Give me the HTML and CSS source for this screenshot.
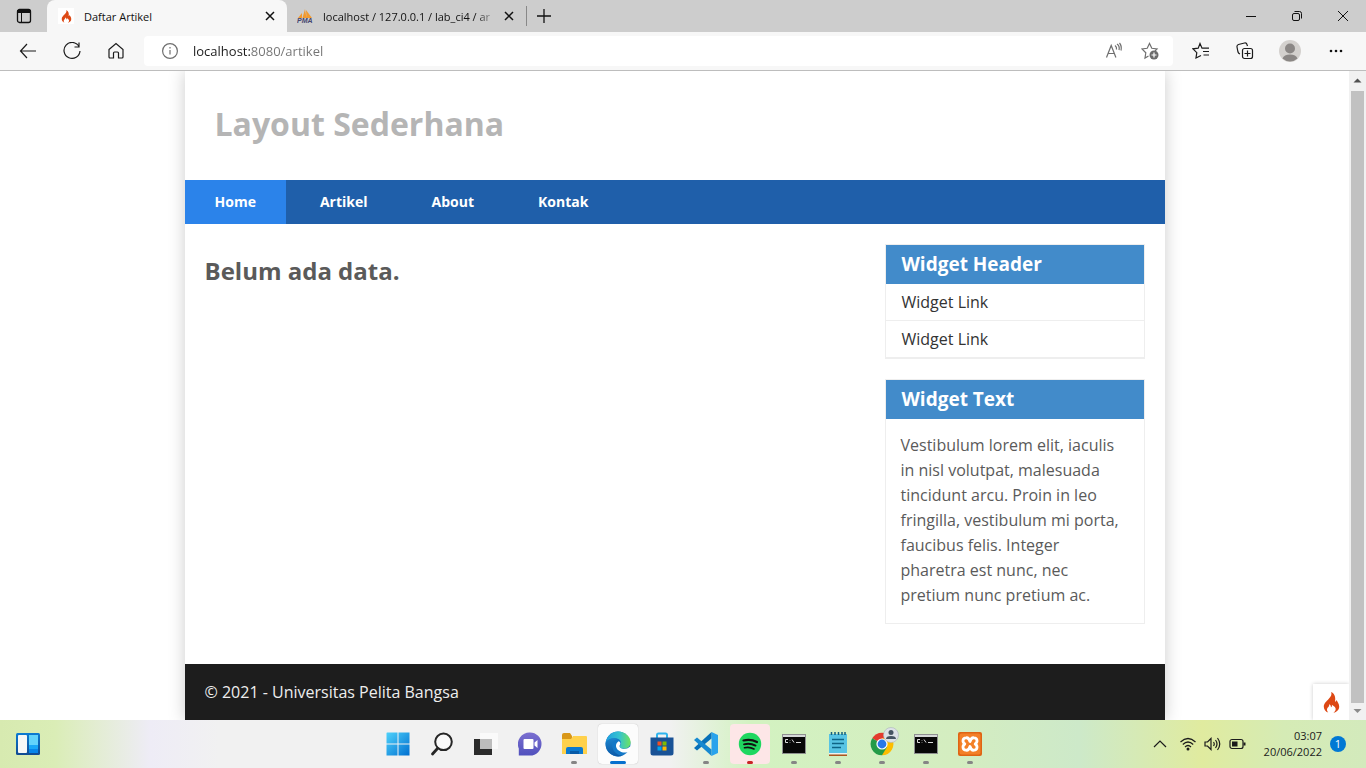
FILE: index.html
```html
<!DOCTYPE html>
<html lang="id">
<head>
<meta charset="utf-8">
<meta name="viewport" content="width=device-width, initial-scale=1">
<title>Daftar Artikel</title>
<link rel="stylesheet" href="styles.css">
</head>
<body>
<svg class="defs" aria-hidden="true">
  <defs>
    <symbol id="flame" viewBox="0 0 24 30"><path d="M11.5 0c1.400 4-.6 6.700-3.600 9.900C4.600 13.500 1 16 1 21c0 3.700 2.400 7 6.300 8.400-2-2-2.500-4.800-.6-7.100 1.300-1.600 2.300-2.600 2-4.900 1.900.9 2.700 2.600 2.500 4.500 1.300-.5 1.800-2.100 1.300-3.700 3.700 2.300 6 4.200 5.400 7.300-.3 1.800-1.300 3-3.100 4 4.800-.9 8.300-4.300 8.200-8.900-.1-4-2.500-6-3.700-9-.6 1.500-1.200 2.200-2.300 2.400C18 9.100 17.400 2.700 11.500 0z"/></symbol>
    <symbol id="cross" viewBox="0 0 12 12"><path d="M2 2l8 8M10 2l-8 8"/></symbol>
    <symbol id="terminal" viewBox="0 0 24 24">
      <rect x="0" y="2" width="24" height="20" fill="#8e9090"/><rect x="1" y="3" width="22" height="2" fill="#d5d8d8"/><rect x="1" y="5" width="22" height="16" fill="#080808"/>
      <path d="M6 7.500H3.500v3H6M8 8v.5M8 10v.5M10 7.500l2 3M14 10.500h5" fill="none" stroke="#ddd" stroke-width="1"/>
    </symbol>
  </defs>
</svg>

<div class="tabs">
  <button class="tab-menu" aria-label="Menu tab">
    <svg width="16" height="16" viewBox="0 0 16 16"><rect x="1.500" y="1.500" width="13" height="13" rx="2" fill="none" stroke="#111" stroke-width="1.300"/><path d="M1 2h14v3H1z" fill="#111"/><path d="M5.500 5v10" stroke="#111"/></svg>
  </button>
  <div class="tab tab-active">
    <span class="favicon favicon-white"><svg class="flame" width="11" height="13"><use href="#flame"/></svg></span>
    <span class="tab-title">Daftar Artikel</span>
    <button class="tab-close" aria-label="Tutup tab"><svg class="cross" width="12" height="12"><use href="#cross"/></svg></button>
  </div>
  <div class="tab">
    <span class="favicon"><svg width="16" height="16" viewBox="0 0 16 16"><path d="M1 10l4-5v5zM5.500 10L8 1l1.500 9zM9.500 10l-.5-8 6 8z" fill="#f29a2e"/><text class="pma" x="0" y="15">PMA</text></svg></span>
    <span class="tab-title tab-fade">localhost / 127.0.0.1 / lab_ci4 / ar</span>
    <button class="tab-close" aria-label="Tutup tab"><svg class="cross" width="12" height="12"><use href="#cross"/></svg></button>
  </div>
  <button class="tab-new" aria-label="Tab baru"><svg width="14" height="14" viewBox="0 0 14 14"><path d="M7 0v14M0 7h14" stroke="#111" stroke-width="1.300"/></svg></button>
  <div class="window-buttons">
    <button aria-label="Minimalkan"><svg width="12" height="12" viewBox="0 0 12 12"><path d="M1 6.500h10" stroke="#111"/></svg></button>
    <button aria-label="Pulihkan"><svg width="12" height="12" viewBox="0 0 12 12" fill="none" stroke="#111"><rect x="1.500" y="3.500" width="7" height="7" rx="1.500"/><path d="M3.500 1.500h5a2 2 0 0 1 2 2v5"/></svg></button>
    <button aria-label="Tutup"><svg width="12" height="12" viewBox="0 0 12 12"><path d="M1 1l10 10M11 1L1 11" stroke="#111"/></svg></button>
  </div>
</div>

<div class="toolbar">
  <button aria-label="Kembali"><svg width="18" height="18" viewBox="0 0 18 18"><path d="M17 9H1.500M8 2L1.500 9 8 16"/></svg></button>
  <button aria-label="Muat ulang"><svg width="18" height="18" viewBox="0 0 18 18"><path d="M16 4.500A8 8 0 1 0 17 9M16 .5v4.500h-4.500"/></svg></button>
  <button aria-label="Beranda"><svg width="18" height="18" viewBox="0 0 18 18"><path d="M2 7.500L9 1.500l7 6V15a1 1 0 0 1-1 1h-3.500v-5a1 1 0 0 0-1-1h-3a1 1 0 0 0-1 1v5H3a1 1 0 0 1-1-1z"/></svg></button>
  <div class="address">
    <svg class="muted" width="16" height="16" viewBox="0 0 16 16"><circle cx="8" cy="8" r="7.400"/><path d="M8 7v4.500M8 4v1.500"/></svg>
    <input class="url" type="text" aria-label="Alamat" value="localhost:8080/artikel">
    <button class="muted" aria-label="Baca nyaring"><svg width="18" height="18" viewBox="0 0 18 18"><path d="M1.500 15.500l4.700-12 4.700 12M3.200 11.500h6M10 3.500q2 1.500 1.500 4M12 2q3 2 2 6M14.500 1q2.500 3 1.500 7.500"/></svg></button>
    <button class="muted" aria-label="Tambah favorit"><svg width="18" height="18" viewBox="0 0 18 18"><path d="M7.500 14L4 16l.8-5.200L1 7l5.200-.7L8.500 1.500l2.300 4.800L16 7l-2 2"/><circle class="solid" cx="13" cy="13" r="4.500" fill="#6b6b6b"/><path class="plus" d="M13 10.500v5M10.500 13h5"/></svg></button>
  </div>
  <button aria-label="Favorit"><svg width="18" height="18" viewBox="0 0 18 18"><path d="M9 13.500L4 16l.8-5.300L1 6.800l5.200-.6L8 1.500l2 4.700h1.500M11.500 6.200H17M11 9.500h6M11.500 13H17"/></svg></button>
  <button aria-label="Koleksi"><svg width="18" height="18" viewBox="0 0 18 18"><rect x="6.500" y="6.500" width="10" height="10" rx="2"/><path d="M11.500 8.500v6M8.500 11.500h6M4 12q-1.500-.5-2-2L1 5q-.3-2 1.500-2.500l6-1.500q2-.4 2.500 1.500l.5 1.500"/></svg></button>
  <button aria-label="Profil"><svg width="22" height="22" viewBox="0 0 22 22"><g class="solid"><circle cx="11" cy="11" r="11" fill="#d4d1ce"/><circle cx="11" cy="8.500" r="5" fill="#8b8785"/><path d="M3.500 18.500Q5 14.500 11 14.500t7.500 4A11 11 0 0 1 3.500 18.500z" fill="#8b8785"/></g></svg></button>
  <button aria-label="Lainnya"><svg width="18" height="18" viewBox="0 0 18 18"><g class="solid" fill="#111"><circle cx="4" cy="9" r="1.300"/><circle cx="9" cy="9" r="1.300"/><circle cx="14" cy="9" r="1.300"/></g></svg></button>
</div>

<div class="viewport">
  <div class="page">
    <div class="container">
      <header class="site-header"><h1>Layout Sederhana</h1></header>
      <nav class="site-nav">
        <a class="active" href="#home">Home</a>
        <a href="#artikel">Artikel</a>
        <a href="#about">About</a>
        <a href="#kontak">Kontak</a>
      </nav>
      <div class="wrapper">
        <main class="content"><h2>Belum ada data.</h2></main>
        <aside class="sidebar">
          <section class="widget">
            <h3>Widget Header</h3>
            <ul>
              <li><a href="#link-1">Widget Link</a></li>
              <li><a href="#link-2">Widget Link</a></li>
            </ul>
          </section>
          <section class="widget">
            <h3>Widget Text</h3>
            <p>Vestibulum lorem elit, iaculis in nisl volutpat, malesuada tincidunt arcu. Proin in leo fringilla, vestibulum mi porta, faucibus felis. Integer pharetra est nunc, nec pretium nunc pretium ac.</p>
          </section>
        </aside>
      </div>
      <footer class="site-footer">© 2021 - Universitas Pelita Bangsa</footer>
    </div>
    <button class="debug" aria-label="Bilah debug"><svg class="flame" width="17" height="21"><use href="#flame"/></svg></button>
  </div>
  <div class="scrollbar" aria-hidden="true">
    <svg width="17" height="20" viewBox="0 0 17 20"><path d="M4.500 11.500l4-4 4 4z" fill="#505050"/></svg>
    <div class="thumb"></div>
    <svg width="17" height="17" viewBox="0 0 17 17"><path d="M4.500 6l4 4 4-4z" fill="#8b8b8b"/></svg>
  </div>
</div>

<div class="taskbar">
  <div class="task-left">
    <button aria-label="Widget"><svg width="24" height="22" viewBox="0 0 24 22"><defs><linearGradient id="wg" x2="0" y2="1"><stop stop-color="#0c7bd3"/><stop offset="1" stop-color="#114a91"/></linearGradient></defs><rect width="24" height="22" rx="1.500" fill="url(#wg)"/><rect x="2" y="2" width="9" height="18" rx="1" fill="#f7f7f7"/><path d="M13 2h9v10h-9z" fill="#62d3fb"/><path d="M13 12h9v4h-9z" fill="#19a7f7"/><path d="M13 16h9v4h-9z" fill="#0785ea"/></svg></button>
  </div>
  <div class="apps">
    <button aria-label="Mulai"><svg width="24" height="24" viewBox="0 0 24 24"><defs><linearGradient id="win" x2="1" y2="1"><stop stop-color="#4fd2fb"/><stop offset="1" stop-color="#006fd0"/></linearGradient></defs><path d="M1 .5h10.500V11.500H.5V1zM12.500.5h11v11h-11zM.5 12.500h11v11H.5zM12.500 12.500h11v11h-11z" fill="url(#win)"/></svg></button>
    <button aria-label="Cari"><svg width="24" height="24" viewBox="0 0 24 24" fill="none" stroke="#262626"><circle cx="13.500" cy="9.800" r="8.300" fill="#fafafa" stroke-width="2"/><path d="M7.500 16.500L2.500 22" stroke-width="2.800" stroke-linecap="round"/></svg></button>
    <button aria-label="Tampilan tugas"><svg width="24" height="24" viewBox="0 0 24 24"><path d="M0 7h18v16H0z" fill="#2b2b2b"/><path d="M6 1h18v16H6z" fill="#fafafa"/><path d="M6 7h12v10H6z" fill="#bdbdbd"/></svg></button>
    <button aria-label="Chat"><svg width="24" height="24" viewBox="0 0 24 24"><defs><linearGradient id="chat" x2="0" y2="1"><stop stop-color="#7b6fd0"/><stop offset="1" stop-color="#5151bd"/></linearGradient></defs><path d="M12 .5a11.500 11.500 0 1 1 0 23H.8v-7A11.500 11.500 0 0 1 12 .5z" fill="url(#chat)"/><rect x="5.500" y="7" width="10" height="10" rx="1" fill="#fff"/><path d="M16.500 10.500l3-2.500v8l-3-2.500z" fill="#fff"/></svg></button>
    <button class="running" aria-label="File Explorer"><svg width="26" height="24" viewBox="0 0 26 24"><path d="M1 3q0-2 2-2h6l2 3v4H1z" fill="#d99718"/><path d="M1 7h9l2-3h13q1 0 1 1v17H1z" fill="#ffd14b"/><path d="M5 22v-5q0-2 2-2h13q2 0 2 2v5z" fill="#0b79d0"/><path d="M9 19h9v3H9z" fill="#075aa7"/></svg></button>
    <button class="focused" aria-label="Microsoft Edge"><svg width="26" height="26" viewBox="0 0 24 24"><defs><linearGradient id="e1" x2="1"><stop stop-color="#1f9ee0"/><stop offset=".55" stop-color="#35c3cf"/><stop offset="1" stop-color="#6ee35d"/></linearGradient><linearGradient id="e2" x2="0" y2="1"><stop stop-color="#1c83cd"/><stop offset="1" stop-color="#0b58a6"/></linearGradient></defs><circle cx="12" cy="12" r="11.500" fill="#1478c7"/><path d="M.6 11C2 3 8 .4 12 .4c7 0 11.600 5 11.600 10 0 4-3 6-6 6-3.500 0-4.600-1.600-3.300-3.400C16 9 12.500 6.500 8.500 6.700 4 7 1.500 9 .6 11z" fill="url(#e1)"/><path d="M.6 11C3 6.500 8.500 6 11 7.500c-4 1-5 4.500-4 8 1.200 4.500 5.500 7.500 9.500 7.100A11.500 11.500 0 0 1 .6 11z" fill="url(#e2)"/><path d="M14 12.500c-1.500 2 0 4 3.500 4 2.500 0 4.500-1 6-2.500v3q-1 2-2.500 2.500C17.500 20.500 14.500 19.500 12 17.500c-2.500-2.200-2.500-6 .5-8 1.500.5 2 1.800 1.500 3z" fill="#fff"/></svg></button>
    <button aria-label="Microsoft Store"><svg width="24" height="24" viewBox="0 0 24 24"><path d="M7 6V3q0-1.500 1.500-1.500h7Q17 1.500 17 3v3" fill="none" stroke="#2fb4ee" stroke-width="2"/><path d="M.5 5.500h23V21q0 2.500-2.500 2.500H3Q.5 23.500.5 21z" fill="#195296"/><path d="M7.500 9.500h4v4h-4z" fill="#f25022"/><path d="M12.500 9.500h4v4h-4z" fill="#7fba00"/><path d="M7.500 14.500h4v4h-4z" fill="#00a4ef"/><path d="M12.500 14.500h4v4h-4z" fill="#ffb900"/></svg></button>
    <button class="running" aria-label="Visual Studio Code"><svg width="24" height="24" viewBox="0 0 24 24"><path d="M17.500 0L24 3v18l-6.500 3z" fill="#29a3ec"/><path d="M17.500 0v6.500L3 18.500 0 16z" fill="#0871b8"/><path d="M17.500 24v-6.500L3 5.500 0 8z" fill="#1689d0"/></svg></button>
    <button class="running alert" aria-label="Spotify"><svg width="24" height="24" viewBox="0 0 24 24"><circle cx="12" cy="12" r="11.200" fill="#1fd760"/><g fill="none" stroke="#111" stroke-linecap="round"><path d="M5.500 8.500q7-2 13.500 1.500" stroke-width="2.200"/><path d="M6 12.300q6-1.700 11.500 1.300" stroke-width="1.900"/><path d="M6.500 15.800q5-1.300 9.500 1.200" stroke-width="1.600"/></g></svg></button>
    <button class="running" aria-label="Command Prompt"><svg width="24" height="24"><use href="#terminal"/></svg></button>
    <button class="running" aria-label="Notepad"><svg width="20" height="26" viewBox="0 0 20 26"><path d="M1 3h18v19H1z" fill="#58c4e4"/><path d="M1 22h18v1.500H1z" fill="#f1f1f1"/><path d="M1 23.500h18V25H1z" fill="#ad5420"/><path d="M3.500 1v3M7 1v3M10.500 1v3M14 1v3M17 1v3" stroke="#145f7d" stroke-width="1.500"/><path d="M4 8.500h12M4 12.500h12M4 16.500h9" stroke="#0e6486" stroke-width="1.500"/></svg></button>
    <button class="running" aria-label="Google Chrome"><svg width="34" height="34" viewBox="-2 0 34 34"><path d="M15 17L5.200 11.300A11.300 11.300 0 0 1 24.800 11.300z" fill="#e33b2e"/><path d="M15 17V11.300h9.800A11.300 11.300 0 0 1 15 28.300z" fill="#fdbd00"/><path d="M15 17l5 3-5 8.300A11.300 11.300 0 0 1 5.200 11.300z" fill="#249b48"/><circle cx="15" cy="17" r="5.600" fill="#fff"/><circle cx="15" cy="17" r="4.400" fill="#2878e8"/><circle cx="24" cy="8" r="7.500" fill="#dde2e7" stroke="#a9b2ba" stroke-width=".6"/><circle cx="24" cy="5.500" r="2.500" fill="#465462"/><path d="M19 12q0-3 5-3t5 3z" fill="#465462"/></svg></button>
    <button class="running" aria-label="Command Prompt"><svg width="24" height="24"><use href="#terminal"/></svg></button>
    <button class="running" aria-label="XAMPP"><svg width="24" height="24" viewBox="0 0 24 24"><rect width="24" height="24" rx="2" fill="#df6413"/><rect x="1.500" y="1.500" width="21" height="21" rx="2" fill="#f38027"/><path d="M12 9.500C11 6 9.500 5.500 8 5.800 4.500 6 4 10 6.800 12 4 14 4.500 18 8 18.200c1.500.3 3-.2 4-3.700 1 3.500 2.500 4 4 3.700 3.500-.2 4-4.200 1.200-6.200C20 10 19.500 6 16 5.800c-1.500-.3-3 .2-4 3.700z" fill="none" stroke="#fff" stroke-width="2.800" stroke-linejoin="round"/></svg></button>
  </div>
  <div class="tray">
    <button aria-label="Ikon tersembunyi"><svg width="14" height="16" viewBox="0 0 14 16"><path d="M1 11l6-6 6 6"/></svg></button>
    <svg width="16" height="16" viewBox="0 0 16 16"><path d="M.5 6Q8-1 15.500 6M2.800 8.500Q8 3.500 13.200 8.500M5 11Q8 8 11 11"/><circle class="solid" cx="8" cy="13" r="1.500" fill="#1b1b1b"/></svg>
    <svg width="17" height="16" viewBox="0 0 17 16"><path d="M1 6h2.500L7 2.500v11L3.500 10H1zM9.500 6q1.500 2 0 4M11.500 4q3 4 0 8M13.500 2q4.500 6 0 12"/></svg>
    <svg width="17" height="16" viewBox="0 0 17 16"><rect x="1" y="3.500" width="13" height="9" rx="2"/><path class="solid" d="M3 5.500h5.500v5H3z" fill="#1b1b1b"/><path d="M15.500 6.500v3" stroke-width="2"/></svg>
    <time class="clock" datetime="2022-06-20T03:07">03:07<br>20/06/2022</time>
    <span class="badge">1</span>
  </div>
</div>
</body>
</html>
```
FILE: styles.css
```css
* { box-sizing: border-box; }

body {
  margin: 0;
  min-height: 100vh;
  display: flex;
  flex-direction: column;
  font-family: "Open Sans", sans-serif;
  background: #fff;
}

button {
  display: flex;
  align-items: center;
  justify-content: center;
  padding: 0;
  border: 0;
  background: none;
  font: inherit;
}

svg { display: block; flex: none; }
.defs { position: absolute; width: 0; height: 0; }
.flame { fill: #dd4814; }
.solid { stroke: none; }
.plus { stroke: #fff; }

/* Tab strip */
.tabs {
  display: flex;
  height: 32px;
  background: #cdcdcd;
  color: #111;
}
.tab-menu { width: 47px; }
.tab {
  display: flex;
  align-items: center;
  width: 240px;
  padding: 0 11px;
}
.tab-active {
  background: #f7f7f7;
  border-radius: 8px 8px 0 0;
}
.tab:not(.tab-active) {
  height: 20px;
  margin-top: 6px;
  padding-left: 10px;
  border-right: 1px solid #888;
}
.favicon {
  display: flex;
  align-items: center;
  justify-content: center;
  width: 16px;
  height: 16px;
  margin-right: 10px;
}
.favicon-white { background: #fff; }
.pma { font: italic bold 7px "Liberation Sans", sans-serif; fill: #45456f; }
.tab-title {
  flex: 1;
  font-size: 11px;
  white-space: nowrap;
}
.tab-fade { mask-image: linear-gradient(90deg, #000 88%, transparent); }
.tab-close { width: 12px; margin-left: 6px; }
.cross { stroke: #111; stroke-width: 1.500; }
.tab-new { width: 34px; }
.window-buttons { display: flex; margin-left: auto; }
.window-buttons button { width: 46px; }

/* Browser toolbar */
.toolbar {
  display: flex;
  align-items: center;
  height: 39px;
  padding: 0 6px;
  padding-right: 10px;
  background: #f7f7f7;
  border-bottom: 1px solid #bdbdbd;
}
.toolbar svg { fill: none; stroke: #1b1b1b; stroke-width: 1.200; }
.toolbar button { width: 44px; height: 30px; }
.toolbar button:nth-last-child(-n+2) { width: 46px; }
.toolbar .muted, .toolbar .muted svg { stroke: #6f6f6f; }
.toolbar button:last-child { margin-right: -3px; }
.address {
  flex: 1;
  display: flex;
  align-items: center;
  height: 30px;
  margin: 0 6px;
  padding-left: 18px;
  border-radius: 4px;
  background: #fff;
}
.toolbar .address button { width: 36px; margin: 0; }
.toolbar .address button:last-child { margin-right: 5px; }
.url {
  flex: 1;
  min-width: 0;
  height: 24px;
  margin-left: 15px;
  padding: 0;
  border: 0;
  font: 13px "Open Sans", sans-serif;
  color: transparent;
  background: linear-gradient(90deg, #1b1b1b 58px, #737373 58px);
  -webkit-background-clip: text;
  background-clip: text;
}

/* Page area */
.viewport { flex: 1; display: flex; }
.page {
  position: relative;
  flex: 1;
  min-width: 0;
  display: flex;
  justify-content: center;
  overflow: hidden;
}
.container {
  display: flex;
  flex-direction: column;
  width: 100%;
  max-width: 980px;
  background: #fff;
  box-shadow: 0 0 16px #ccc;
  color: #5a5a5a;
  font-size: 16px;
}
.site-header { padding: 30px 30px 34px; }
.site-header h1 {
  margin: 0;
  font-size: 32px;
  line-height: 45px;
  color: #b5b5b5;
}
.site-nav {
  display: flex;
  gap: 4px;
  background: #1f5faa;
}
.site-nav a {
  padding: 0 30px;
  font-size: 14px;
  font-weight: 700;
  line-height: 44px;
  color: #fff;
  text-decoration: none;
}
.site-nav .active { background: #2b83ea; }
.wrapper {
  flex: 1;
  display: flex;
  gap: 20px;
  padding: 20px;
}
.content { flex: 1; }
.content h2 {
  margin: 10px 0;
  font-size: 24px;
  line-height: 34px;
}
.sidebar { width: 260px; }
.widget {
  margin-bottom: 20px;
  border: 1px solid #eee;
}
.widget h3 {
  margin: 0;
  padding: 0 16px;
  font-size: 19px;
  line-height: 39px;
  color: #fff;
  background: #428bca;
}
.widget ul { margin: 0; padding: 0; list-style: none; }
.widget li { border-bottom: 1px solid #eee; }
.widget li a {
  display: block;
  padding: 0 16px;
  line-height: 36px;
  color: #333;
  text-decoration: none;
}
.widget p {
  margin: 0;
  padding: 14px 15px 15px;
  line-height: 25px;
}
.site-footer {
  padding: 16px 20px;
  line-height: 24px;
  color: #eee;
  background: #1d1d1d;
}
.debug {
  position: absolute;
  right: 0;
  bottom: 0;
  width: 36px;
  height: 36px;
  background: #fff;
  box-shadow: 0 0 4px #ccc;
}
.scrollbar {
  display: flex;
  flex-direction: column;
  width: 17px;
  background: #f1f1f1;
}
.thumb { flex: 1; margin: 0 2px; background: #c1c1c1; }

/* Taskbar */
.taskbar {
  display: grid;
  grid-template-columns: 1fr auto 1fr;
  align-items: center;
  height: 48px;
  padding-left: 2px;
  background: linear-gradient(90deg, #d7eab0 0, #daedb6 4%, #eeecf6 11%, #f1f1f1 16%, #f1f1f1 49%, #d3f2c1 55%, #d4edc0 70%, #cde9c9 79%, #e0eb9f 88%, #d5ebb5 94%, #d3eabc 100%);
}
.task-left { padding-left: 14px; justify-self: start; }
.apps { display: flex; gap: 4px; }
.apps button {
  position: relative;
  width: 40px;
  height: 40px;
  border-radius: 4px;
}
.focused { background: #fcfcfc; box-shadow: 0 0 1px #aaa; }
.alert { background: #fde6e7; }
.running::after, .focused::after {
  content: "";
  position: absolute;
  bottom: 0;
  left: 17px;
  width: 6px;
  height: 3px;
  border-radius: 2px;
  background: #858585;
}
.focused::after { left: 12px; width: 16px; background: #0670ce; }
.alert::after { background: #c92424; }
.tray {
  display: flex;
  align-items: center;
  justify-content: flex-end;
  gap: 8px;
  padding-right: 20px;
}
.tray button { margin-right: 5px; }
.tray svg { fill: none; stroke: #1b1b1b; stroke-width: 1.200; }
.clock {
  margin-left: 10px;
  font-size: 11px;
  line-height: 16px;
  text-align: right;
  color: #1b1b1b;
}
.badge {
  width: 16px;
  height: 16px;
  border-radius: 50%;
  font-size: 11px;
  line-height: 16px;
  text-align: center;
  color: #fff;
  background: #0078d4;
}
```
